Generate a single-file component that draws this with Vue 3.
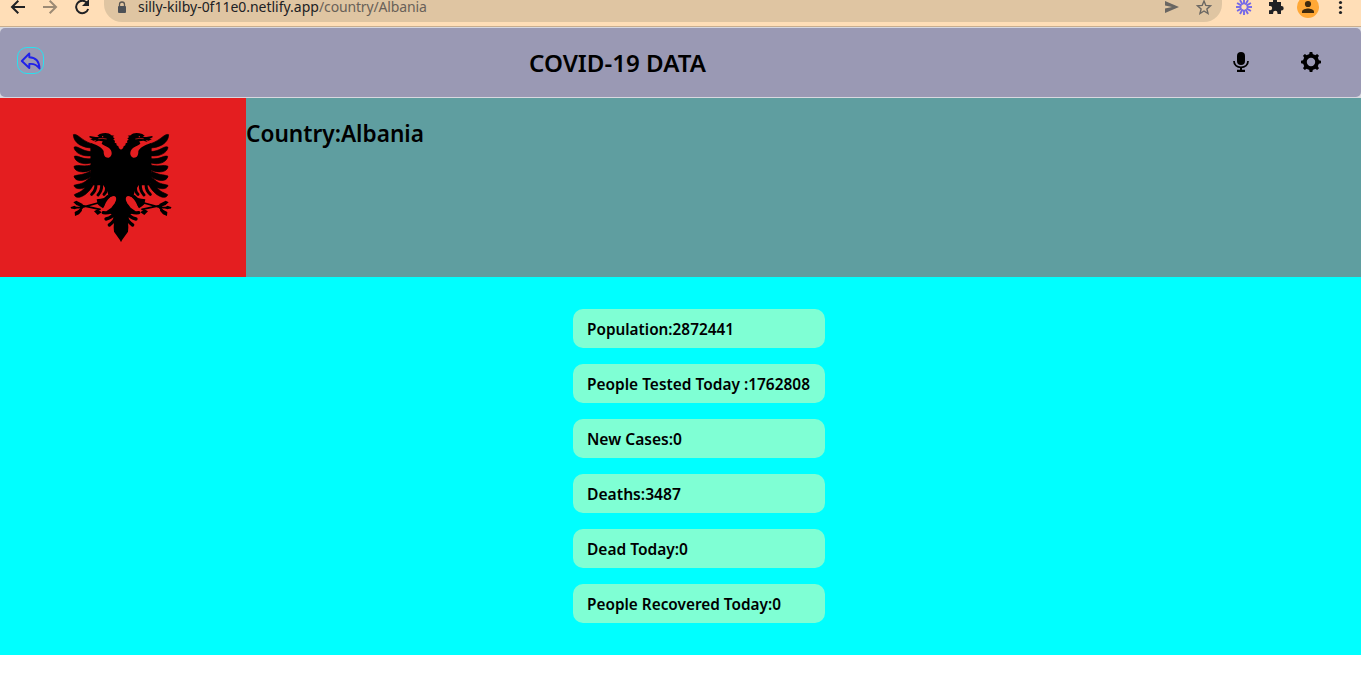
<script setup>
const stats = [
  { text: 'Population:2872441', width: 147 },
  { text: 'People Tested Today :1762808', width: 223 },
  { text: 'New Cases:0', width: 95 },
  { text: 'Deaths:3487', width: 94 },
  { text: 'Dead Today:0', width: 101 },
  { text: 'People Recovered Today:0', width: 194 },
]
const rays = Array.from({ length: 12 }, (_, i) => i * 30)
const teeth = Array.from({ length: 8 }, (_, i) => i * 45)
</script>

<template>
  <div class="page">
    <div class="browser">
      <svg class="nav" width="104" height="26" viewBox="0 0 104 26" fill="none" stroke-width="2">
        <path d="M25 7H12M18.300 .7L12 7l6.300 6.300" stroke="#202124" />
        <path d="M43 7h13M49.700 .7L56 7l-6.300 6.300" stroke="#9c8a74" />
        <path d="M87.300 3.200A6.200 6.200 0 1 0 88.200 9" stroke="#202124" />
        <path d="M89 -1v7h-7z" fill="#202124" />
      </svg>
      <div class="address">
        <svg class="lock" width="10" height="14" viewBox="0 0 10 14">
          <path d="M2.500 6V3.500a2.500 2.500 0 0 1 5 0V6" fill="none" stroke="#5a5651" stroke-width="1.300" />
          <rect x="1" y="5" width="8" height="7" rx="1" fill="#4d5156" />
        </svg>
        <div class="url"><span class="host">silly-kilby-0f11e0.netlify.app</span><span class="path">/country/Albania</span></div>
        <svg class="tools" width="52" height="22" viewBox="0 0 52 22">
          <path d="M3 1l14 6-14 6V8.500L10 7 3 5.500z" fill="#696662" />
          <path d="M42 .8l1.800 4.300 4.700.4-3.600 3.100 1.100 4.600-4-2.500-4 2.500 1.100-4.600-3.600-3.100 4.700-.4z" transform="translate(0 .3)" fill="none" stroke="#696662" stroke-width="1.400" />
        </svg>
      </div>
      <svg class="extensions" width="139" height="26" viewBox="1222 0 139 26">
        <g stroke="#7468e8" stroke-width="1.900">
          <path v-for="a in rays" :key="a" d="M1244 4.300v-5.300" :transform="`rotate(${a} 1244 7)`" />
        </g>
        <path d="M1269 2h4v-1a2 2 0 0 1 4 0v1h4v4h.500a2.200 2.200 0 0 1 0 4.400H1281V14h-3.500v-1a2.200 2.200 0 0 0-4.400 0v1H1269v-3.700h1a2.200 2.200 0 0 0 0-4.400h-1z" fill="#202124" />
        <circle cx="1308" cy="7" r="11" fill="#ffa836" />
        <circle cx="1308" cy="4" r="3.100" fill="#3e2a0e" />
        <path d="M1302 13v-1.600c0-2 4-3 6-3s6 1 6 3V13z" fill="#3e2a0e" />
        <g fill="#202124"><circle cx="1340.500" cy="2.500" r="1.600" /><circle cx="1340.500" cy="7.500" r="1.600" /><circle cx="1340.500" cy="12.500" r="1.600" /></g>
      </svg>
    </div>

    <header class="header">
      <a class="back">
        <svg width="26" height="26" viewBox="0 0 26 26">
          <path d="M11.300 5.500L3.800 13l7.500 7v-4c4.500-.6 7.600 1 10.200 4.500C21.300 13.500 17.500 9.500 11.300 9.200z" fill="none" stroke="#2020ea" stroke-width="1.900" stroke-linejoin="round" />
        </svg>
      </a>
      <h1>
        <svg width="180" height="40"><text x="0" y="24" textLength="177" lengthAdjust="spacingAndGlyphs">COVID-19 DATA</text></svg>
      </h1>
      <div class="actions">
        <svg width="20" height="24" viewBox="0 0 20 24">
          <rect x="6" y="2" width="8" height="13" rx="4" />
          <path d="M3 11c0 4 3 6.300 7 6.300s7-2.300 7-6.300" fill="none" stroke="#000" stroke-width="1.800" />
          <path d="M9 17h2v2.800h3V22H6v-2.200h3z" />
        </svg>
        <svg width="22" height="24" viewBox="-11 -12 22 24">
          <circle r="6.100" fill="none" stroke="#000" stroke-width="3.800" />
          <path v-for="a in teeth" :key="a" d="M-2 -7L-1.300 -10h2.600L2 -7z" :transform="`rotate(${a})`" />
        </svg>
      </div>
    </header>

    <section class="country">
      <div class="flag">
        <svg width="140" height="140" viewBox="0 0 420 420">
          <defs>
            <g id="eagle-half">
              <path d="M214 105L207 100 205 94 200 91 199 85 194 83 195 77 190 74 194 70 188 66 193 62 184 61C177 53 165 52 149 57L142 62 148 66 137 66 119 63 118 67 128 71 120 72 130 77 139 75 133 81 146 77 158 79 155 86C159 91 169 93 177 99 188 107 188 125 176 128 165 129 161 122 161 109 158 99 143 91 124 84L121 92 122 180 118 197 129 211 160 211 172 228 176 246 196 246 194 265 184 278 170 288 174 295 188 298 192 321 191 337 192 350 214 381z" />
              <path stroke="#000" stroke-width="2" d="M70 59C82 54 92 75 124 86L126 99C99 98 71 86 70 59zM72 97C83 90 94 109 125 110V122C97 126 74 113 72 97zM73 124C85 120 94 134 124 131L125 143C100 152 74 141 73 124zM72 154C86 147 96 157 123 150L125 164C102 176 73 172 72 154zM72 183C87 178 99 181 121 168L125 183C106 200 74 202 72 183zM72 211C88 206 100 208 118 189L127 201C112 223 74 228 72 211zM73 239C87 231 99 232 117 201L130 209C112 244 78 257 73 239z" />
              <g fill="none" stroke="#000" stroke-linecap="round">
                <path d="M125 238Q138 228 138 207M144 240Q156 227 155 209M162 238Q173 228 168 211" stroke-width="9" />
                <path d="M160 293Q182 296 195 278M168 312Q188 308 197 289M178 330Q193 320 202 299" stroke-width="10" />
                <path d="M65 278H93L155 261M78 264L98 277 80 296M94 271L150 283" stroke-width="5" />
              </g>
              <path d="M70 262L79 257 98 267 98 277 88 272 80 271zM61 278L73 272 83 278 74 283zM75 303L74 291 84 286 94 279 96 287 87 298zM140 253L152 251 162 249 172 240 184 243 159 280 150 274 143 268zM132 289L143 283 155 292 143 300z" />
              <path d="M192 243C204 246 198 264 187 270 176 285 162 290 163 276 167 258 180 244 192 243z" fill="#e41e20" />
              <circle cx="158" cy="65" r="2" fill="#e41e20" />
              <path d="M145 71Q160 69 170 72" fill="none" stroke="#e41e20" stroke-width="2" />
            </g>
          </defs>
          <use href="#eagle-half" />
          <use href="#eagle-half" transform="translate(426 0) scale(-1 1)" />
        </svg>
      </div>
      <h2>
        <svg width="190" height="40"><text x="0" y="26" textLength="178" lengthAdjust="spacingAndGlyphs">Country:Albania</text></svg>
      </h2>
    </section>

    <main class="stats">
      <ul>
        <li v-for="item in stats" :key="item.text">
          <svg width="226" height="39"><text x="0" y="26" :textLength="item.width" lengthAdjust="spacingAndGlyphs">{{ item.text }}</text></svg>
        </li>
      </ul>
    </main>
  </div>
</template>

<style scoped>
.page { height: 694px; overflow: hidden; background: linear-gradient(#d8d8df 98px, #fff 98px); font-family: "Noto Sans", sans-serif; }
.page svg { display: block; overflow: visible; }
.browser { display: flex; height: 26px; background: #ffdeb7; border-bottom: 1px solid #c9ae8f; }
.address { display: flex; width: 1118px; height: 22px; flex: none; background: #dfc5a2; border-radius: 0 0 18px 18px; }
.lock { margin: 1px 0 0 13px; }
.url { display: flex; margin-left: 11px; font-size: 14px; line-height: 20px; margin-top: -3px; white-space: nowrap; }
.host { width: 181px; color: #202124; letter-spacing: -0.02px; }
.path { color: #696158; letter-spacing: -0.15px; }
.tools { margin-left: auto; margin-right: 8px; }
.header { display: grid; grid-template-columns: 529px 1fr 142px; height: 69px; margin-top: 1px; margin-bottom: 1px; border-radius: 5px; background: #9a99b4; }
.back { width: 25px; height: 25px; margin: 19px 0 0 17px; border: 1px solid #28e1f0; border-radius: 10px; }
h1, h2 { margin: 0; }
h1 { padding-top: 20px; }
h1 text, h2 text { font-size: 24px; font-weight: 600; }
.actions { display: flex; gap: 49px; padding-top: 22px; margin-left: 12px; }
.country { display: flex; height: 179px; background: #5f9ea0; }
.flag { width: 246px; box-sizing: border-box; padding: 17px 0 0 50px; background: #e41e20; }
h2 { padding-top: 18px; }
.stats { height: 378px; background: #0ff; overflow: hidden; }
ul { display: grid; grid-auto-rows: 39px; gap: 16px; width: 252px; margin: 32px 0 0 573px; padding: 0; list-style: none; }
li { box-sizing: border-box; padding-left: 14px; background: #7fffd4; border-radius: 10px; }
li text { font-size: 16px; font-weight: 600; }
</style>
<style>
body { overflow: hidden; }
</style>
